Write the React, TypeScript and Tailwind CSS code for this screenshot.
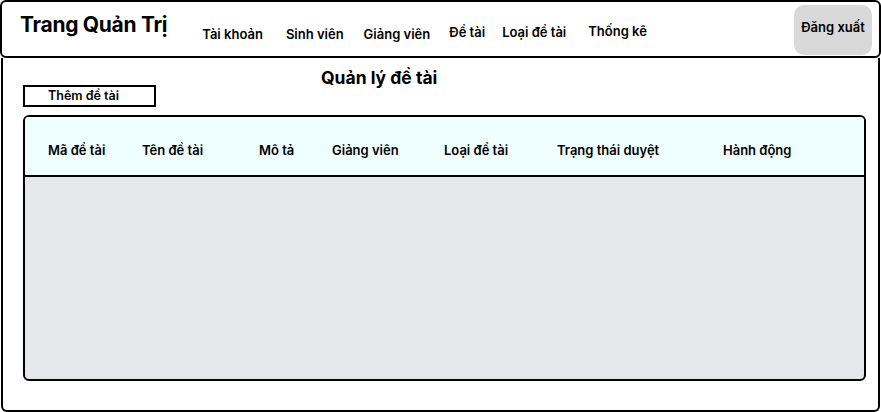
const navItems = [
  { label: 'Tài khoản', cls: 'ml-[35px] mt-[24px]' },
  { label: 'Sinh viên', cls: 'ml-[23px] mt-[24px]' },
  { label: 'Giảng viên', cls: 'ml-[20px] mt-[24px]' },
  { label: 'Đề tài', cls: 'ml-[19px] mt-[22px]' },
  { label: 'Loại đề tài', cls: 'ml-[17px] mt-[22px]' },
  { label: 'Thống kê', cls: 'ml-[22px] mt-[21px]' },
];

const columns = [
  { label: 'Mã đề tài', cls: 'w-[94px]' },
  { label: 'Tên đề tài', cls: 'w-[117px]' },
  { label: 'Mô tả', cls: 'w-[73px]' },
  { label: 'Giảng viên', cls: 'w-[112px]' },
  { label: 'Loại đề tài', cls: 'w-[113px]' },
  { label: 'Trạng thái duyệt', cls: 'w-[166px]' },
  { label: 'Hành động', cls: '' },
];

export default function App() {
  return (
    <div
      className="w-[881px] h-[412px] flex flex-col bg-white text-black"
      style={{ fontFamily: 'Inter, "Noto Sans", sans-serif' }}
    >
      <header className="h-[58px] shrink-0 border-2 border-black rounded-md flex items-start">
        <h1 className="ml-[18px] mt-[11px] text-[21px] leading-6 font-bold tracking-[-0.3px]">
          Trang Quản Trị
        </h1>
        {navItems.map((n) => (
          <span key={n.label} className={`${n.cls} text-[13px] leading-4 font-semibold`}>
            {n.label}
          </span>
        ))}
        <button className="ml-auto mr-[7px] mt-[3px] w-[78px] h-[50px] bg-[#d9d9d9] rounded-[10px] text-[13px] font-semibold flex justify-center pt-[13px]">
          Đăng xuất
        </button>
      </header>

      <main className="flex-1 border-2 border-t-0 border-black rounded-b-md mx-[1px] pl-[20px] pr-[12px] pb-[29px] flex flex-col">
        <div className="flex items-start">
          <button className="mt-[27px] w-[133px] h-[22px] border-2 border-black text-[12.5px] font-semibold text-left pl-[23px] leading-[18px]">
            Thêm đề tài
          </button>
          <h2 className="ml-[165px] mt-[8px] text-[17.5px] font-bold leading-6">Quản lý đề tài</h2>
        </div>

        <div className="mt-[8px] flex-1 border-2 border-black rounded-md overflow-hidden flex flex-col bg-[#e6e7eb]">
          <div className="h-[60px] shrink-0 bg-[#effefe] border-b-2 border-black flex items-center pl-[23px] pt-[9px]">
            {columns.map((c) => (
              <span key={c.label} className={`${c.cls} text-[13px] font-semibold`}>
                {c.label}
              </span>
            ))}
          </div>
          <div className="flex-1" />
        </div>
      </main>
    </div>
  );
}
